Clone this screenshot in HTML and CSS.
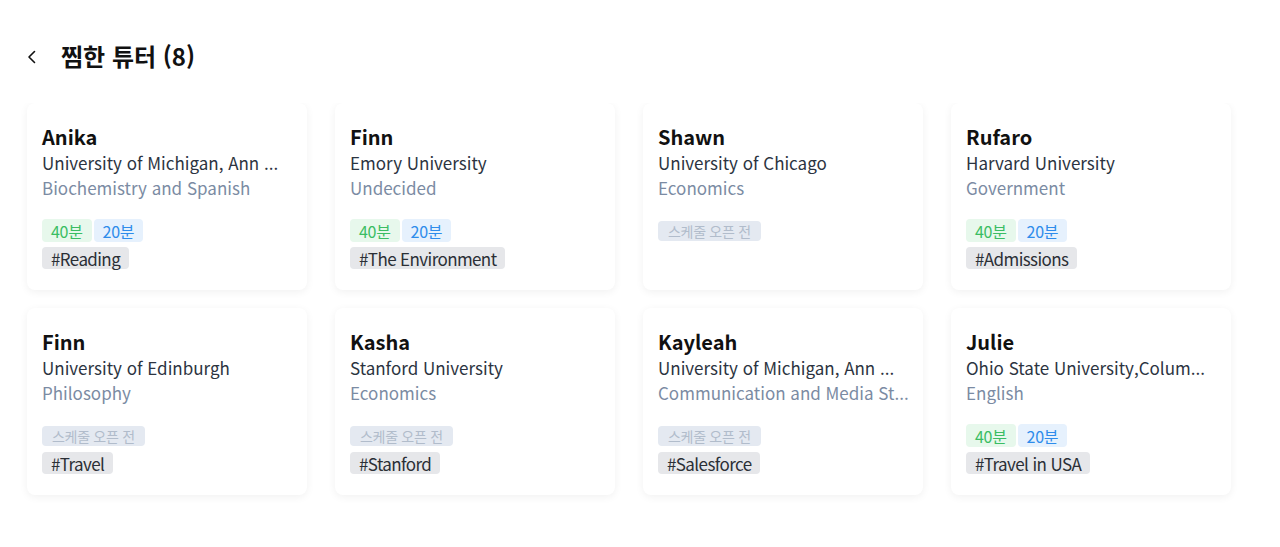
FILE: index.html
```html
<!DOCTYPE html>
<html lang="ko">
<head>
<meta charset="utf-8">
<title>찜한 튜터</title>
<link rel="stylesheet" href="styles.css">
</head>
<body>
<div class="page">
  <header class="header">
    <button class="back" aria-label="뒤로">
      <svg width="12" height="16" viewBox="0 0 12 16"><path d="M8.5 2.5 L3 8 L8.5 13.5" fill="none" stroke="#111" stroke-width="1.6" stroke-linecap="round" stroke-linejoin="round"/></svg>
    </button>
    <h1 class="title">찜한 튜터 (8)</h1>
  </header>
  <div class="scroll">
    <div class="grid">
      <div class="card">
        <div class="name">Anika</div>
        <div class="school">University of Michigan, Ann ...</div>
        <div class="major">Biochemistry and Spanish</div>
        <div class="badges"><span class="badge green">40분</span><span class="badge blue">20분</span></div>
        <div class="tags"><span class="tag">#Reading</span></div>
      </div>
      <div class="card">
        <div class="name">Finn</div>
        <div class="school">Emory University</div>
        <div class="major">Undecided</div>
        <div class="badges"><span class="badge green">40분</span><span class="badge blue">20분</span></div>
        <div class="tags"><span class="tag">#The Environment</span></div>
      </div>
      <div class="card">
        <div class="name">Shawn</div>
        <div class="school">University of Chicago</div>
        <div class="major">Economics</div>
        <div class="badges"><span class="badge closed">스케줄 오픈 전</span></div>
        <div class="tags"></div>
      </div>
      <div class="card">
        <div class="name">Rufaro</div>
        <div class="school">Harvard University</div>
        <div class="major">Government</div>
        <div class="badges"><span class="badge green">40분</span><span class="badge blue">20분</span></div>
        <div class="tags"><span class="tag">#Admissions</span></div>
      </div>
      <div class="card">
        <div class="name">Finn</div>
        <div class="school">University of Edinburgh</div>
        <div class="major">Philosophy</div>
        <div class="badges"><span class="badge closed">스케줄 오픈 전</span></div>
        <div class="tags"><span class="tag">#Travel</span></div>
      </div>
      <div class="card">
        <div class="name">Kasha</div>
        <div class="school">Stanford University</div>
        <div class="major">Economics</div>
        <div class="badges"><span class="badge closed">스케줄 오픈 전</span></div>
        <div class="tags"><span class="tag">#Stanford</span></div>
      </div>
      <div class="card">
        <div class="name">Kayleah</div>
        <div class="school">University of Michigan, Ann ...</div>
        <div class="major">Communication and Media St...</div>
        <div class="badges"><span class="badge closed">스케줄 오픈 전</span></div>
        <div class="tags"><span class="tag">#Salesforce</span></div>
      </div>
      <div class="card">
        <div class="name">Julie</div>
        <div class="school">Ohio State University,Colum...</div>
        <div class="major">English</div>
        <div class="badges"><span class="badge green">40분</span><span class="badge blue">20분</span></div>
        <div class="tags"><span class="tag">#Travel in USA</span></div>
      </div>
    </div>
  </div>
</div>
</body>
</html>
```

FILE: styles.css
```css
* { box-sizing: border-box; }
html, body { margin: 0; padding: 0; background: #fff; }
body {
  font-family: "Noto Sans CJK KR", "Noto Sans", sans-serif;
  color: #111;
}
.page { width: 1280px; }
.header {
  display: flex;
  align-items: center;
  height: 56px;
  margin-top: 27px;
  padding-left: 26px;
}
.back {
  border: 0;
  background: none;
  padding: 0;
  width: 16px;
  height: 16px;
  display: flex;
  align-items: center;
  margin-top: 4px;
  cursor: pointer;
}
.title {
  margin: 0 0 0 19px;
  font-size: 24px;
  font-weight: 700;
  letter-spacing: 0;
  color: #111;
}
.scroll {
  margin-top: 20px;
  padding: 0 27px 30px 27px;
  overflow: hidden;
}
.grid {
  display: grid;
  grid-template-columns: repeat(4, 280px);
  column-gap: 28px;
  row-gap: 18px;
}
.card {
  background: #fff;
  border-radius: 8px;
  box-shadow: 0 2px 8px rgba(0, 0, 0, 0.06);
  padding: 20px 15px 19px 15px;
  height: 187px;
  display: flex;
  flex-direction: column;
}
.name {
  font-size: 20px;
  font-weight: 700;
  line-height: 27px;
  color: #111;
}
.school, .major {
  font-size: 17px;
  line-height: 25px;
  white-space: nowrap;
}
.school { color: #2c3441; }
.major { color: #7b8ba3; }
.badges {
  display: flex;
  gap: 2px;
  margin-top: 19px;
  height: 23px;
}
.badge {
  display: inline-flex;
  align-items: center;
  justify-content: center;
  height: 23px;
  padding: 0 9px;
  border-radius: 4px;
  font-size: 16px;
  letter-spacing: -0.3px;
}
.badge.green { background: #e7f8ec; color: #3bbd63; }
.badge.blue { background: #e6f1fd; color: #2e8ceb; }
.badge.closed { background: #e4e9f1; color: #b1bccb; font-size: 14px; padding: 0 10px; height: 20px; margin-top: 2px; }
.tags {
  display: flex;
  margin-top: 5px;
  height: 22px;
}
.tag {
  display: inline-flex;
  align-items: center;
  height: 22px;
  padding: 0 9px;
  border-radius: 4px;
  background: #e6e7ea;
  color: #2b2f36;
  font-size: 17px;
  letter-spacing: -0.6px;
}
```
